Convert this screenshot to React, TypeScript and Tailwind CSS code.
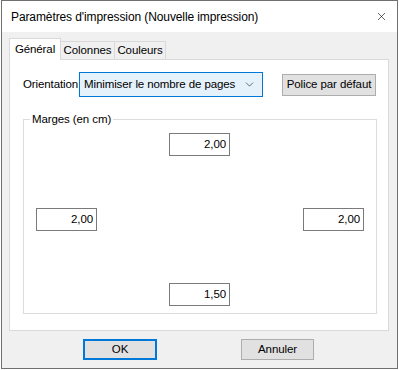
import { ChevronDown, X } from "lucide-react";

const font = { fontFamily: '"Liberation Sans", Arial, sans-serif' };

function MarginBox({ value }: { value: string }) {
  return (
    <div className="w-[61px] h-[23px] border border-[#7a7a7a] bg-white flex items-center justify-end pr-[3px] text-black">
      {value}
    </div>
  );
}

export default function App() {
  return (
    <div className="w-[399px] h-[370px] bg-white" style={font}>
      <div className="ml-px w-[397px] h-[369px] border border-[#707070] flex flex-col text-[11.5px] text-black tracking-[-0.1px]">
        {/* barre de titre */}
        <div className="h-[31px] bg-white flex items-center justify-between pl-[9px] pr-[9px] shrink-0">
          <span className="text-[12px] tracking-[-0.1px]">Paramètres d'impression (Nouvelle impression)</span>
          <X className="w-[13px] h-[13px] text-black" strokeWidth={1.1} />
        </div>

        <div className="flex-1 bg-[#f0f0f0] flex flex-col pl-[7px] pr-[8px] pt-[5px]">
          {/* onglets */}
          <div className="flex items-end h-[22px]">
            <div className="w-[52px] h-[22px] bg-white border border-b-0 border-[#d9d9d9] flex items-center justify-center relative top-px z-10">
              Général
            </div>
            <div className="w-[54px] h-[18px] border border-l-0 border-b-0 border-[#d9d9d9] flex items-center justify-center">
              Colonnes
            </div>
            <div className="w-[51px] h-[18px] border border-l-0 border-b-0 border-[#d9d9d9] flex items-center justify-center">
              Couleurs
            </div>
          </div>

          {/* panneau */}
          <div className="h-[272px] bg-white border border-[#d9d9d9] flex flex-col pl-[13px] pr-[10px] pt-[12px]">
            <div className="flex items-center h-[25px]">
              <span className="w-[56px] shrink-0 whitespace-nowrap">Orientation</span>
              <div className="w-[184px] shrink-0 h-[25px] border border-[#0078d7] bg-[#e5f1fb] flex items-center justify-between pl-[4px] pr-[6px]">
                <span className="whitespace-nowrap">Minimiser le nombre de pages</span>
                <ChevronDown className="w-[13px] h-[13px] text-[#333]" strokeWidth={1.3} />
              </div>
              <button className="ml-[19px] shrink-0 w-[94px] h-[22px] bg-[#e1e1e1] border border-[#adadad] flex items-center justify-center whitespace-nowrap">
                Police par défaut
              </button>
            </div>

            <div className="relative mt-[22px] h-[195px] w-[354px] border border-[#dcdcdc] px-[12px] pt-[13px] pb-[7px] flex flex-col justify-between">
              <span className="absolute left-[6px] top-[-8px] bg-white px-[2px] leading-[14px]">
                Marges (en cm)
              </span>
              <div className="flex justify-center pr-[1px]">
                <MarginBox value="2,00" />
              </div>
              <div className="flex justify-between">
                <MarginBox value="2,00" />
                <MarginBox value="2,00" />
              </div>
              <div className="flex justify-center pr-[1px]">
                <MarginBox value="1,50" />
              </div>
            </div>
          </div>

          {/* boutons */}
          <div className="flex justify-center gap-[84px] mt-[8px] pr-[1px]">
            <button className="w-[74px] h-[21px] bg-[#e1e1e1] border-2 border-[#0078d7] flex items-center justify-center">
              OK
            </button>
            <button className="w-[73px] h-[21px] bg-[#e1e1e1] border border-[#adadad] flex items-center justify-center">
              Annuler
            </button>
          </div>
        </div>
      </div>
    </div>
  );
}
